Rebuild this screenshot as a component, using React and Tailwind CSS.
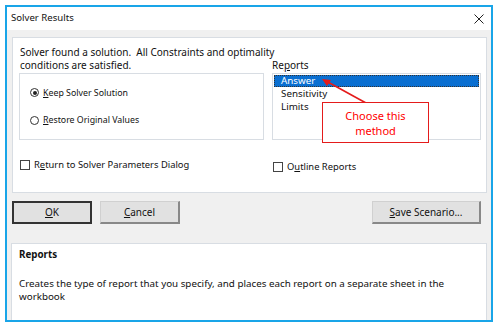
import React from 'react';

const font = { fontFamily: '"Noto Sans", "Open Sans", sans-serif' };

function Radio({ checked, children }) {
    return (
        <div className="flex items-center gap-[4px]">
            <span className="w-[9px] h-[9px] rounded-full border border-[#333] bg-white flex items-center justify-center">
                {checked && <span className="w-[4px] h-[4px] rounded-full bg-[#222]" />}
            </span>
            <span>{children}</span>
        </div>
    );
}

function Check({ children }) {
    return (
        <div className="flex items-center gap-[4px]">
            <span className="w-[10px] h-[10px] border-[1.5px] border-[#444] bg-white" />
            <span>{children}</span>
        </div>
    );
}

export default function App() {
    return (
        <div className="w-[499px] h-[329px] bg-white pt-[5px] pl-[5px] text-[#111]" style={font}>
            <div className="w-[488px] h-[317px] border-2 border-[#19a5e8] bg-[#f0f0f0] flex flex-col">

                {/* Title bar */}
                <div className="h-[23px] bg-white flex items-center justify-between pl-[4px] pr-[6px] text-[9.6px]">
                    <span>Solver Results</span>
                    <svg width="10" height="10" viewBox="0 0 10 10" className="mr-[1px]">
                        <path d="M0.5 0.5 L9.5 9.5 M9.5 0.5 L0.5 9.5" stroke="#222" strokeWidth="1" />
                    </svg>
                </div>

                {/* Main group */}
                <div className="mt-[7px] ml-[5px] w-[475px] h-[156px] bg-white border border-[#d8dde3] pl-[6px] pt-[8px] text-[10px] leading-[12.5px]">
                    <div className="pl-[1px]">Solver found a solution.&nbsp; All Constraints and optimality</div>
                    <div className="grid grid-cols-[245px_209px] gap-x-[8px]">
                        <div className="pl-[1px]">conditions are satisfied.</div>
                        <div>Re<span className="underline">p</span>orts</div>

                        {/* Radio box */}
                        <div className="mt-[2px] h-[67px] border border-[#d8dde3] flex flex-col justify-center gap-[15px] pl-[10px] text-[8.8px]">
                            <Radio checked><span className="underline">K</span>eep Solver Solution</Radio>
                            <Radio><span className="underline">R</span>estore Original Values</Radio>
                        </div>

                        {/* Reports list */}
                        <div className="relative mt-[2px] h-[67px] border border-[#d8dde3] p-[1px] text-[9.8px]">
                            <div className="h-[12px] bg-[#0a6fd1] text-white pl-[7px] leading-[12px] outline outline-1 outline-dotted outline-[#333] -outline-offset-1">Answer</div>
                            <div className="pl-[7px] h-[13px] leading-[14px]">Sensitivity</div>
                            <div className="pl-[7px] h-[13px] leading-[14px]">Limits</div>

                            {/* Callout */}
                            <svg className="absolute left-[45px] top-[2px]" width="50" height="30" viewBox="0 0 50 30">
                                <line x1="48" y1="27" x2="8" y2="5" stroke="#e41b1b" strokeWidth="1.6" />
                                <path d="M4 3 L13 4 L9 10 Z" fill="#e41b1b" />
                            </svg>
                            <div className="absolute left-[49px] top-[28px] w-[107px] h-[41px] bg-white border border-[#e41b1b] text-[#f00] text-[11px] leading-[15px] flex flex-col items-center justify-center">
                                <span>Choose this</span>
                                <span>method</span>
                            </div>
                        </div>

                        <div className="mt-[19px] pl-[1px] text-[9.4px]">
                            <Check>R<span className="underline">e</span>turn to Solver Parameters Dialog</Check>
                        </div>
                        <div className="mt-[21px] pl-[1px] text-[9.4px]">
                            <Check>O<span className="underline">u</span>tline Reports</Check>
                        </div>
                    </div>
                </div>

                {/* Buttons */}
                <div className="mt-[8px] ml-[5px] w-[469px] flex text-[10px]">
                    <button className="w-[80px] h-[23px] bg-[#e1e1e1] border-2 border-[#333] flex items-center justify-center">
                        <span className="underline">O</span>K
                    </button>
                    <button className="ml-[8px] w-[80px] h-[23px] bg-[#e1e1e1] border border-[#d0d0d0] border-r-2 border-b-2 border-r-[#888] border-b-[#888] flex items-center justify-center">
                        <span className="underline">C</span>ancel
                    </button>
                    <button className="ml-auto w-[109px] h-[23px] bg-[#e1e1e1] border border-[#d0d0d0] border-r-2 border-b-2 border-r-[#888] border-b-[#888] flex items-center justify-center">
                        <span className="underline">S</span>ave Scenario...
                    </button>
                </div>

                {/* Help panel */}
                <div className="mt-[19px] ml-[4px] w-[476px] flex-1 bg-white border border-[#d8dde3] border-b-0 pl-[7px] pt-[4px] text-[9.8px] leading-[13px]">
                    <div className="font-bold">Reports</div>
                    <div className="mt-[16px]">Creates the type of report that you specify, and places each report on a separate sheet in the workbook</div>
                </div>
            </div>
        </div>
    );
}
